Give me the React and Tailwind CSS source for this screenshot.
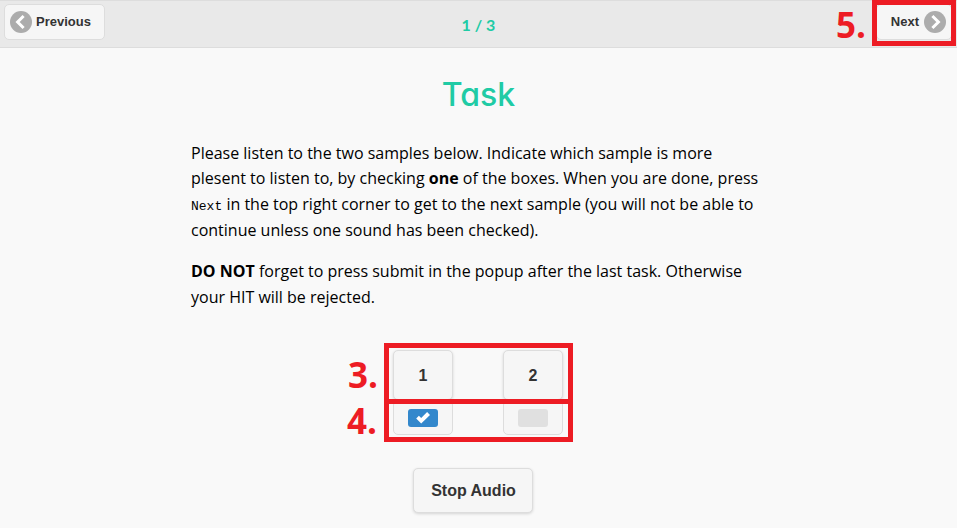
const arial = "font-['Liberation_Sans',Arial,sans-serif] font-bold text-[#333]";
const box = "border border-[#ddd] bg-[#f6f6f6] shadow-[0_1px_3px_rgba(0,0,0,0.15)]";

function Chevron({ flip }) {
  return (
    <svg width="22" height="22" viewBox="0 0 22 22" className={flip ? "-scale-x-100 shrink-0" : "shrink-0"}>
      <circle cx="11" cy="11" r="11" fill="#acacac" />
      <path d="M13.6 5 7.6 11l6 6" fill="none" stroke="#fff" strokeWidth="3" />
    </svg>
  );
}

function Mark({ children, className }) {
  return (
    <span className={`absolute font-['Open_Sans',sans-serif] text-[35px] font-bold leading-[40px] text-[#ed1c24] ${className}`}>
      {children}
    </span>
  );
}

function Sample({ label, checked }) {
  return (
    <div className="flex w-[60px] flex-col">
      <button className={`${arial} ${box} h-[50px] rounded-[5px] pl-px pt-0.5 text-base`}>{label}</button>
      <div className="flex h-[35px] items-center justify-center rounded-[5px] border border-[#ddd] bg-[#f6f6f6] pt-px">
        <span className={`flex h-[18px] w-[30px] items-center justify-center rounded-[3px] ${checked ? "bg-[#3388cc]" : "bg-[#e0e0e0]"}`}>
          {checked && (
            <svg width="14" height="12" viewBox="0 0 14 12">
              <path d="M14 3 11.1.1 5.2 5.9 2.9 3.7.2 6.6l5 4.9z" fill="#fff" />
            </svg>
          )}
        </span>
      </div>
    </div>
  );
}

export default function App() {
  return (
    <div className="relative h-[528px] w-[957px] overflow-hidden bg-[#f9f9f9] font-['Open_Sans',sans-serif] text-black">
      <header className="grid h-12 grid-cols-[101px_1fr_76px] items-start border-y border-[#ddd] bg-[#e9e9e9] pl-1 pr-[5px] pt-[3px]">
        <button className={`${arial} flex h-9 items-center gap-1 rounded-[5px] border border-[#ddd] bg-[#f6f6f6] pl-[5px]`}>
          <Chevron />
          <span className="-mt-px text-[13px]">Previous</span>
        </button>
        <span className="pr-6 pt-[9px] text-center font-['Lato',sans-serif] text-base font-bold leading-6 text-[#20cba5]">1 / 3</span>
        <button className={`${arial} flex h-9 items-center justify-end gap-[5px] rounded-[5px] border border-[#ddd] bg-[#f6f6f6] pr-[5px]`}>
          <span className="-mt-px text-[13px]">Next</span>
          <Chevron flip />
        </button>
      </header>

      <main className="flex flex-col items-center">
        <h1 className="mt-[27px] h-[40px] font-['Inter',sans-serif] text-[32px] font-medium leading-10 text-[#20cba5] [font-feature-settings:'cv11']">Task</h1>
        <div className="mt-[25.8px] w-[575px] text-base leading-[25.6px]">
          <p>
            Please listen to the two samples below. Indicate which sample is more<br />
            plesent to listen to, by checking <b>one</b> of the boxes. When you are done, press<br />
            <code className="font-['Liberation_Mono',monospace] text-[13px] leading-none">Next</code> in the top right corner to get to the next sample (you will not be able to<br />
            continue unless one sound has been checked).
          </p>
          <p className="mt-[16.2px]">
            <b>DO NOT</b> forget to press submit in the popup after the last task. Otherwise<br />
            your HIT will be rejected.
          </p>
        </div>
        <div className="mr-[2px] mt-[39px] flex gap-[50px]">
          <Sample label="1" checked />
          <Sample label="2" />
        </div>
        <button className={`${arial} ${box} mr-[12px] mt-[33px] h-[45px] w-[120px] rounded-[5px] pl-0.5 pr-0 pt-0.5 text-base`}>Stop Audio</button>
      </main>

      <div className="absolute left-[872px] top-0 h-[46px] w-[84px] border-[5px] border-[#ed1c24]" />
      <div className="absolute left-[384px] top-[343px] h-[61px] w-[189px] border-[5px] border-[#ed1c24]" />
      <div className="absolute left-[384px] top-[399px] h-[43px] w-[189px] border-[5px] border-[#ed1c24]" />
      <Mark className="left-[836px] top-[5px]">5.</Mark>
      <Mark className="left-[348px] top-[355px]">3.</Mark>
      <Mark className="left-[347px] top-[401px]">4.</Mark>
    </div>
  );
}
